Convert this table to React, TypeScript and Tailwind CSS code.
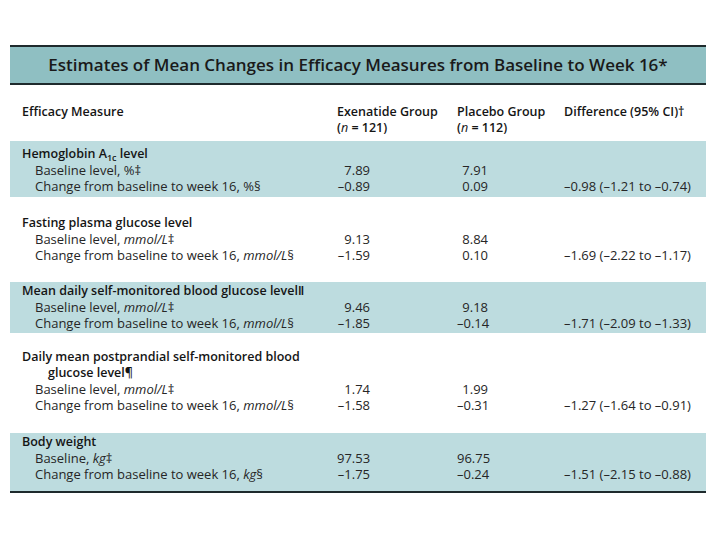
import React from 'react';

type Line = {
  label: React.ReactNode;
  bold?: boolean;
  indent?: 0 | 1 | 2;
  exe?: string;
  pla?: string;
  diff?: string;
};

type Section = {
  shaded: boolean;
  pad: string;
  lines: Line[];
};

const It = ({ children }: { children: React.ReactNode }) => (
  <i className="inline-block leading-4 align-top">{children}</i>
);

const mm = <It>mmol/L</It>;

const sections: Section[] = [
  {
    shaded: true,
    pad: 'pt-[5px] pb-[3px]',
    lines: [
      {
        label: (
          <>
            Hemoglobin A
            <span className="inline-block align-top relative top-[7px] h-[9px] text-[9px] leading-[9px]">1c</span> level
          </>
        ),
        bold: true,
      },
      { label: <>Baseline level, %‡</>, indent: 1, exe: '7.89', pla: '7.91' },
      {
        label: <>Change from baseline to week 16, %§</>,
        indent: 1,
        exe: '–0.89',
        pla: '0.09',
        diff: '–0.98 (–1.21 to –0.74)',
      },
    ],
  },
  {
    shaded: false,
    pad: 'pt-[18px] pb-[19px]',
    lines: [
      { label: <>Fasting plasma glucose level</>, bold: true },
      { label: <>Baseline level, {mm}‡</>, indent: 1, exe: '9.13', pla: '8.84' },
      {
        label: <>Change from baseline to week 16, {mm}§</>,
        indent: 1,
        exe: '–1.59',
        pla: '0.10',
        diff: '–1.69 (–2.22 to –1.17)',
      },
    ],
  },
  {
    shaded: true,
    pad: 'pt-[1px] pb-[2px]',
    lines: [
      { label: <>Mean daily self-monitored blood glucose level‖</>, bold: true },
      { label: <>Baseline level, {mm}‡</>, indent: 1, exe: '9.46', pla: '9.18' },
      {
        label: <>Change from baseline to week 16, {mm}§</>,
        indent: 1,
        exe: '–1.85',
        pla: '–0.14',
        diff: '–1.71 (–2.09 to –1.33)',
      },
    ],
  },
  {
    shaded: false,
    pad: 'pt-[16px] pb-[20px]',
    lines: [
      { label: <>Daily mean postprandial self-monitored blood</>, bold: true },
      { label: <>glucose level¶</>, bold: true, indent: 2 },
      { label: <>Baseline level, {mm}‡</>, indent: 1, exe: '1.74', pla: '1.99' },
      {
        label: <>Change from baseline to week 16, {mm}§</>,
        indent: 1,
        exe: '–1.58',
        pla: '–0.31',
        diff: '–1.27 (–1.64 to –0.91)',
      },
    ],
  },
  {
    shaded: true,
    pad: 'pt-[1px] pb-[9px]',
    lines: [
      { label: <>Body weight</>, bold: true },
      { label: <>Baseline, <It>kg</It>‡</>, indent: 1, exe: '97.53', pla: '96.75' },
      {
        label: <>Change from baseline to week 16, <It>kg</It>§</>,
        indent: 1,
        exe: '–1.75',
        pla: '–0.24',
        diff: '–1.51 (–2.15 to –0.88)',
      },
    ],
  },
];

function Row({ line }: { line: Line }) {
  const indent = line.indent === 2 ? 'pl-[26px]' : line.indent === 1 ? 'pl-[13px]' : '';
  return (
    <div className="flex h-4 items-center whitespace-nowrap leading-4">
      <div
        className={`w-[327px] pl-3 ${line.bold ? 'font-semibold text-[12.5px] leading-4 text-[#151515]' : ''}`}
      >
        <div className={indent}>{line.label}</div>
      </div>
      <div className="w-[120px]">
        <div className="w-[33px] text-right">{line.exe}</div>
      </div>
      <div className="w-[107px]">
        <div className="w-[31px] text-right">{line.pla}</div>
      </div>
      <div className="flex-1">{line.diff}</div>
    </div>
  );
}

export default function App() {
  return (
    <div className="w-[720px] h-[540px] bg-white pt-[45px] pl-[10px] text-[#262626] font-['Open_Sans',sans-serif] text-[13px] leading-4">
      <div className="w-[696px]">
        <div className="h-[40px] border-t-2 border-b-2 border-[#1e2a2c] bg-[#8fbfc2] flex items-center justify-center text-[17px] leading-6 font-semibold text-[#1a1a1a]">
          Estimates of Mean Changes in Efficacy Measures from Baseline to Week 16*
        </div>
        <div className="pt-[19px] pb-[5px] font-semibold text-[12.5px] leading-4 text-[#151515]">
          <div className="flex h-4 items-center whitespace-nowrap">
            <div className="w-[327px] pl-3">Efficacy Measure</div>
            <div className="w-[120px]">Exenatide Group</div>
            <div className="w-[107px]">Placebo Group</div>
            <div className="flex-1">Difference (95% CI)†</div>
          </div>
          <div className="flex h-4 items-center whitespace-nowrap">
            <div className="w-[327px] pl-3"></div>
            <div className="w-[120px]">
              (<i className="inline-block leading-4 align-top font-normal">n</i> = 121)
            </div>
            <div className="w-[107px]">
              (<i className="inline-block leading-4 align-top font-normal">n</i> = 112)
            </div>
            <div className="flex-1"></div>
          </div>
        </div>
        {sections.map((s, i) => (
          <div key={i} className={`${s.pad} ${s.shaded ? 'bg-[#bddcdf]' : ''}`}>
            {s.lines.map((l, j) => (
              <Row key={j} line={l} />
            ))}
          </div>
        ))}
        <div className="h-[2px] bg-[#1e2a2c]"></div>
      </div>
    </div>
  );
}
